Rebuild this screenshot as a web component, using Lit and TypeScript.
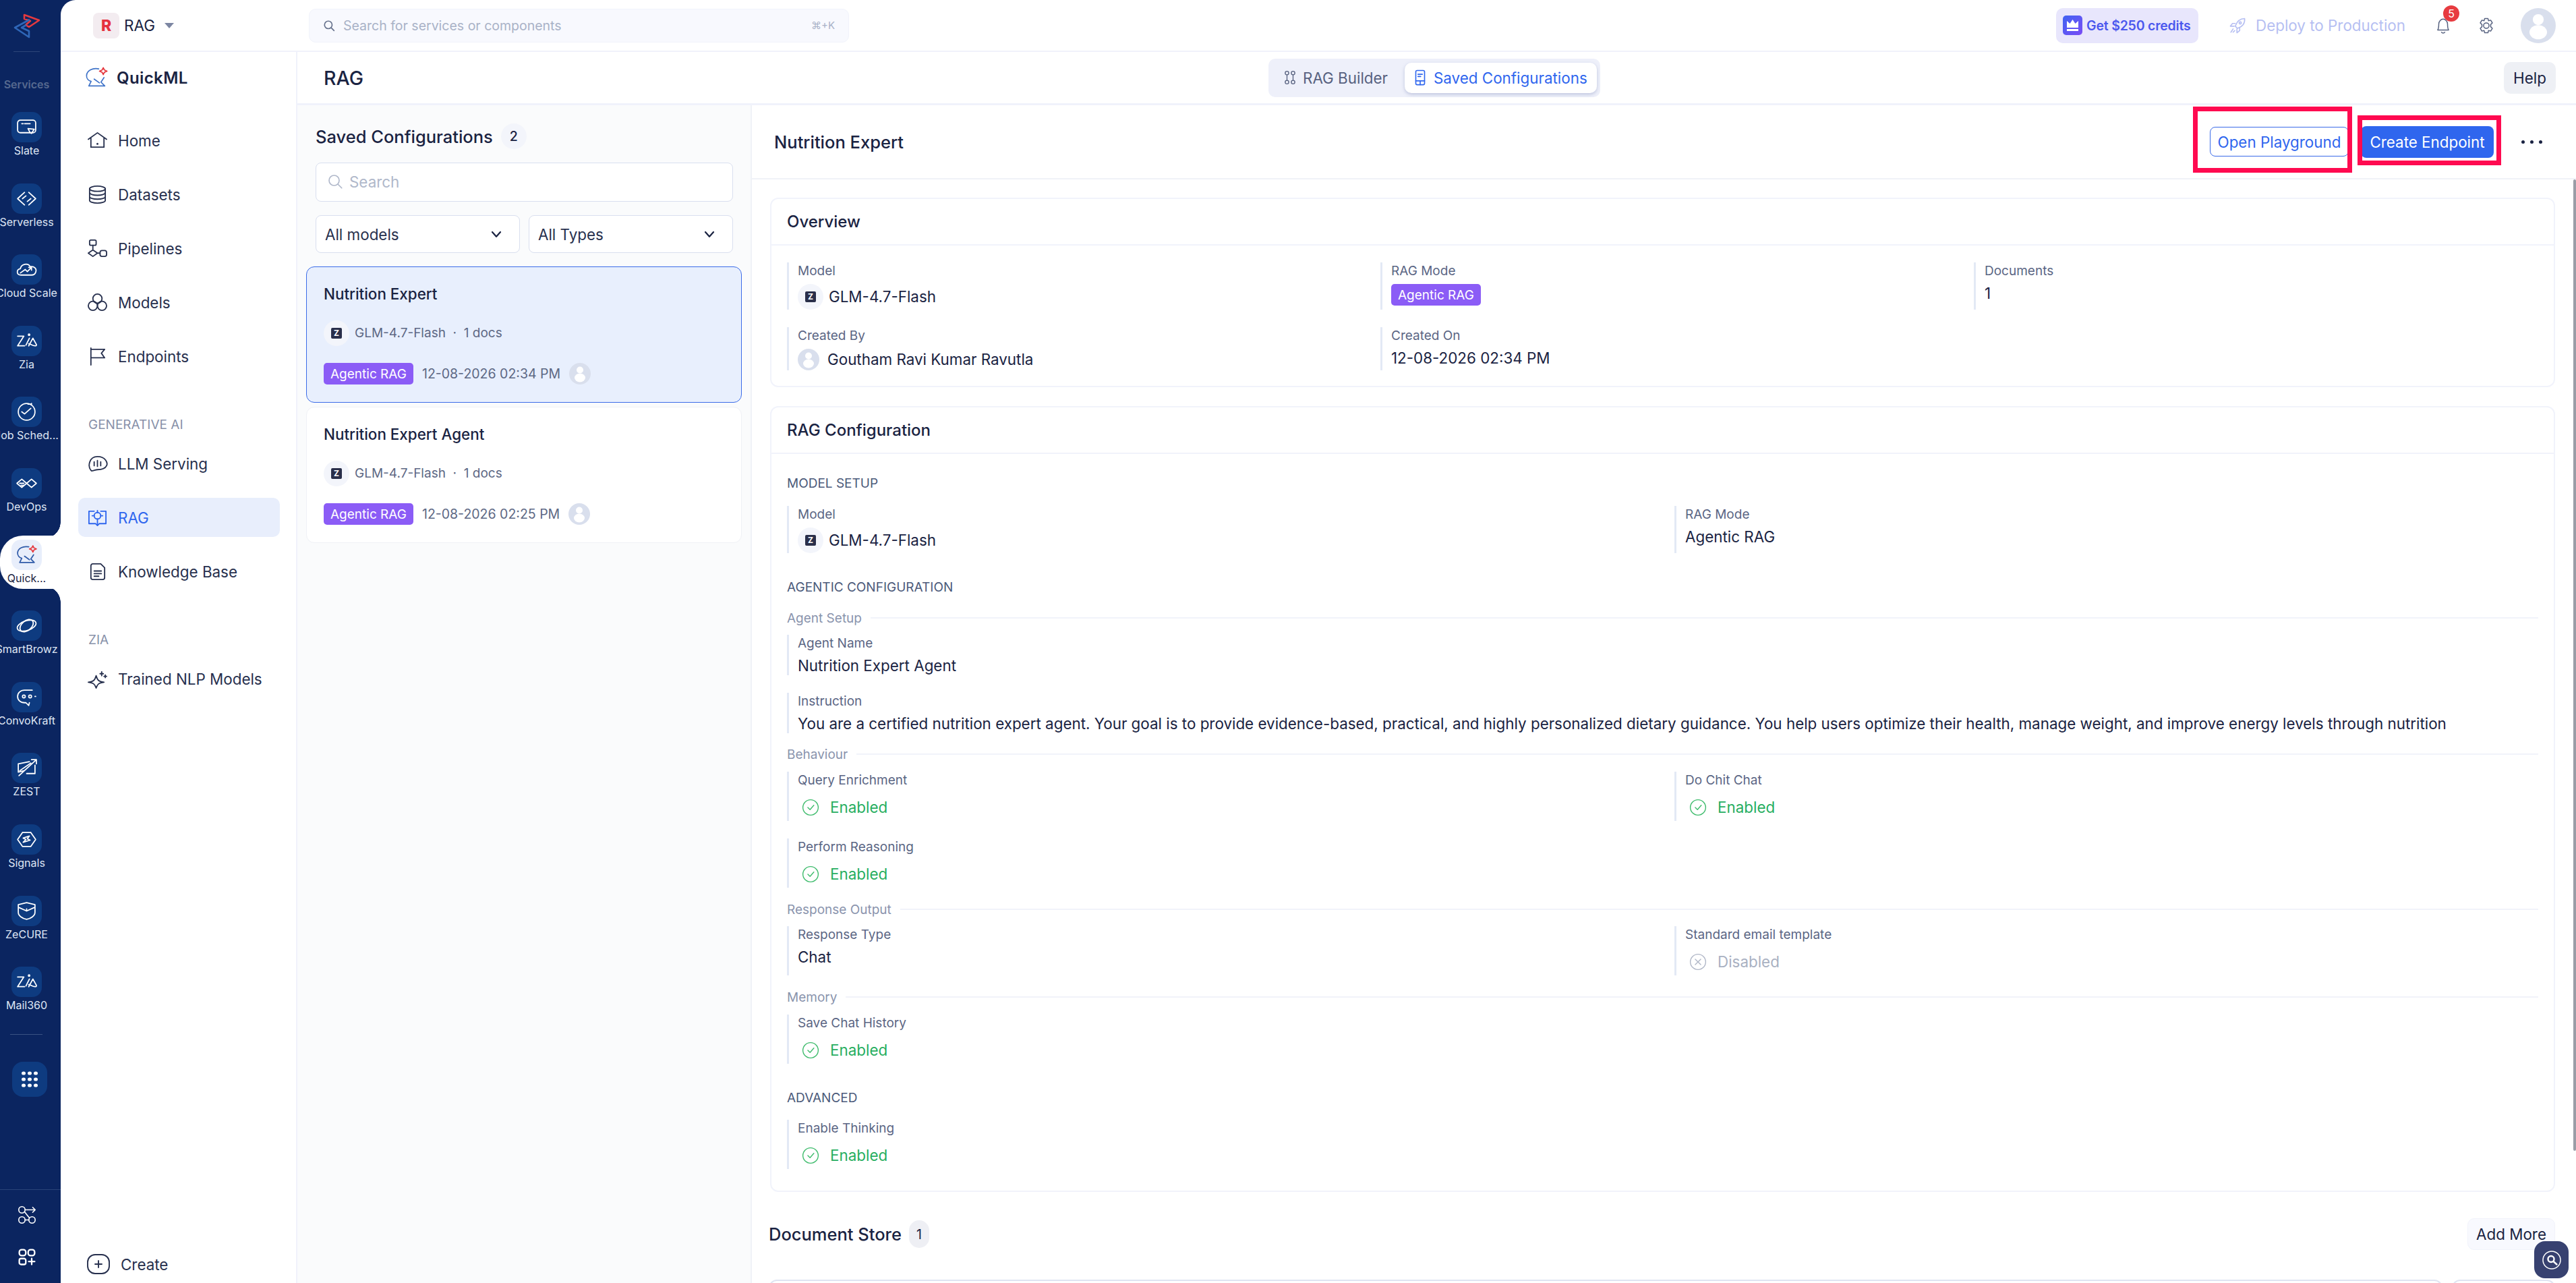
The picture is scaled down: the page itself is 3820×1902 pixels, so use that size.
import { LitElement, html, css, svg } from 'lit';
import { customElement } from 'lit/decorators.js';

const ic = (size: number, body: unknown, color = 'currentColor', sw = 1.6) => html`<svg
  width=${size}
  height=${size}
  viewBox="0 0 32 32"
  fill="none"
  stroke=${color}
  stroke-width=${sw}
  stroke-linecap="round"
  stroke-linejoin="round"
>${body}</svg>`;

const ZIA = svg`<path d="M3 9h9L3 23h10"/><path d="M15 22l5-10"/><circle cx="19.5" cy="7" r="1" fill="currentColor"/><path d="M19 23l6-11 5 9c.5 1.400-.5 2-2 2-4 0-6-3-9-3"/>`;
const QUICK = svg`<path d="M19 4.500C11 3 3.500 6.500 3 13c-.3 4 2.500 7 6 8l-3 6h21l-5-5 4-6"/><path d="M13 18l7 5"/><path d="M25 3l1.500 3L30 7.500 26.500 9 25 12l-1.500-3L20 7.500 23.500 6z" stroke="#e5393f" fill="none"/>`;

const RAIL: { label: string; icon: unknown; active?: boolean }[] = [
  { label: 'Slate', icon: svg`<rect x="3" y="6" width="26" height="18" rx="4"/><path d="M9 11h2M13 11h8"/><path d="M18 18l9 1-4 6-2-1z"/>` },
  { label: 'Serverless', icon: svg`<path d="M13 7L3 16l10 9M10 16l5-4M19 7l10 9-10 9M22 16l-5 4"/>` },
  { label: 'Cloud Scale', icon: svg`<path d="M8 24c-7 0-7-8-1-9 1-7 11-9 14-3 6-1 10 3 8 8-1 3-3 4-6 4z"/><path d="M7 21l7-5 3 3 6-6M19 13h4v4"/>` },
  { label: 'Zia', icon: ZIA },
  { label: 'Job Sched...', icon: svg`<circle cx="16" cy="16" r="12"/><path d="M9 16l4 3 9-8M18 5h5v-1"/>` },
  { label: 'DevOps', icon: svg`<path d="M2 16l7-6 7 6-7 6zM16 16l7-6 7 6-7 6zM6 16h6M8 19h4"/>` },
  { label: 'Quick...', icon: QUICK, active: true },
  { label: 'SmartBrowz', icon: svg`<ellipse cx="16" cy="16" rx="14" ry="7" transform="rotate(-18 16 16)"/><ellipse cx="16" cy="16" rx="7" ry="11" transform="rotate(50 16 16)"/>` },
  { label: 'ConvoKraft', icon: svg`<path d="M24 6H13C7 6 3 10 3 15s4 9 10 9h2l4 4 1-4"/><circle cx="12" cy="15" r="2"/><circle cx="21" cy="15" r="2"/><path d="M29 15h-1"/>` },
  { label: 'ZEST', icon: svg`<path d="M4 10l16-3M4 10v12l8-2M30 4L5 27M30 4h-7M30 4v6M28 12v12H16M22 9L6 20"/>` },
  { label: 'Signals', icon: svg`<path d="M10 6L3 16l7 10M22 6l7 10-7 10M10 6h12M10 26h12"/><path d="M11 20l10-3-4-2 3-4-9 3 4 2z"/>` },
  { label: 'ZeCURE', icon: svg`<path d="M16 4l12 3v11c0 5-6 9-12 10C10 27 4 23 4 18V7z"/><path d="M5 11l11 5 11-5M16 16v-3"/>` },
  { label: 'Mail360', icon: ZIA },
];

const NAV_TOP = [
  { label: 'Home', icon: svg`<path d="M2 14L16 4l14 10M6 12v14h20V12"/><circle cx="16" cy="21" r=".6" fill="currentColor"/>` },
  { label: 'Datasets', icon: svg`<ellipse cx="16" cy="7" rx="12" ry="4"/><path d="M4 7v18c0 2 5 4 12 4s12-2 12-4V7M4 13c0 2 5 4 12 4s12-2 12-4M4 19c0 2 5 4 12 4s12-2 12-4"/>` },
  { label: 'Pipelines', icon: svg`<rect x="4" y="3" width="10" height="8" rx="2"/><path d="M9 11v7M2 23l7-5 7 5-7 5zM16 23h4"/><rect x="20" y="19" width="10" height="9" rx="3"/>` },
  { label: 'Models', icon: svg`<circle cx="16" cy="10" r="7"/><circle cx="9" cy="21" r="7"/><circle cx="23" cy="21" r="7"/>` },
  { label: 'Endpoints', icon: svg`<path d="M6 3v26M6 5h21l-5 6 5 7H6"/>` },
];

const CHECK = (size = 26) => ic(size, svg`<circle cx="16" cy="16" r="14"/><path d="M11 16l4 4 7-8"/>`, '#3dbb6b', 1.7);

const AVATAR = (size: number) => html`<svg width=${size} height=${size} viewBox="0 0 32 32">
  <circle cx="16" cy="16" r="16" fill="#d9dfed"></circle>
  <circle cx="16" cy="10.500" r="5" fill="#fff"></circle>
  <ellipse cx="16" cy="22" rx="8" ry="6.500" fill="#fff"></ellipse>
</svg>`;

const ZLOGO = html`<span class="zlogo"><b>Z</b></span>`;

@customElement('app-root')
export class AppRoot extends LitElement {
  static styles = css`
    :host {
      display: block;
      font-family: Inter, 'Liberation Sans', sans-serif;
      color: #1a2342;
    }
    * {
      box-sizing: border-box;
    }
    .app {
      display: flex;
      width: 100vw;
      height: 100vh;
      overflow: hidden;
      background: #0b2560;
    }

    /* left rail */
    .rail {
      width: 90px;
      flex: none;
      display: flex;
      flex-direction: column;
      overflow: hidden;
      color: #fff;
    }
    .rail-logo {
      height: 77px;
      margin: 0 11px 0 0;
      display: flex;
      align-items: center;
      justify-content: center;
      position: relative;
    }
    .rail-logo::after {
      content: '';
      position: absolute;
      left: 20px;
      right: 20px;
      bottom: 0;
      height: 1px;
      background: #2c4578;
    }
    .rail-title {
      width: 79px;
      text-align: center;
      font-size: 16px;
      font-weight: 600;
      color: #56698f;
      height: 24px;
      line-height: 24px;
      margin: 36px 0 29px;
    }
    .rail-item {
      width: 79px;
      height: 105.6px;
      display: flex;
      flex-direction: column;
      align-items: center;
      position: relative;
    }
    .rail-box {
      width: 45px;
      height: 45px;
      flex: none;
      border-radius: 14px;
      background: #0e3b80;
      display: flex;
      align-items: center;
      justify-content: center;
      position: relative;
      z-index: 1;
    }
    .rail-label {
      font-size: 16px;
      line-height: 24px;
      white-space: nowrap;
      color: #dfe6f4;
      position: relative;
      z-index: 1;
    }
    .rail-item.active .rail-box {
      background: #e8eefb;
      color: #2f5aa8;
    }
    .rail-item.active .rail-label {
      color: #1a2342;
    }
    .pill {
      position: absolute;
      left: 0;
      right: -11px;
      top: -6px;
      height: 79px;
      background: #fff;
      border-radius: 34px 0 0 34px;
    }
    .pill::before,
    .pill::after {
      content: '';
      position: absolute;
      right: 0;
      width: 24px;
      height: 20px;
    }
    .pill::before {
      top: -20px;
      background: radial-gradient(circle at 0 0, #0b2560 23.500px, #fff 24px);
    }
    .pill::after {
      bottom: -20px;
      background: radial-gradient(circle at 0 100%, #0b2560 23.500px, #fff 24px);
    }
    .rail-div {
      width: 48px;
      height: 1px;
      margin: -6px 0 0 15px;
      background: #3a5283;
      flex: none;
    }
    .rail-grid {
      width: 52px;
      height: 52px;
      flex: none;
      margin: 40px 0 0 18px;
      border-radius: 16px;
      background: #0e3b80;
      display: grid;
      place-items: center;
    }
    .rail-foot {
      margin-top: auto;
      height: 139px;
      flex: none;
      border-top: 1px solid #2a4478;
      display: flex;
      flex-direction: column;
      align-items: center;
      gap: 34px;
      padding: 22px 11px 0 0;
    }

    .shell {
      flex: 1;
      min-width: 0;
      background: #fff;
      border-top-left-radius: 22px;
      display: flex;
      flex-direction: column;
      overflow: hidden;
    }

    /* top bar */
    .topbar {
      height: 77px;
      flex: none;
      border-bottom: 2px solid #f0f2fb;
      display: flex;
      align-items: center;
      padding: 0 30px 0 48px;
    }
    .brand {
      width: 320px;
      display: flex;
      align-items: center;
      font-size: 22.500px;
    }
    .brand-r {
      width: 39px;
      height: 38px;
      border-radius: 8px;
      background: #f3ecf0;
      color: #e5323f;
      font-weight: 800;
      font-size: 23px;
      display: grid;
      place-items: center;
      margin-right: 7px;
    }
    .caret {
      width: 0;
      height: 0;
      margin-left: 14px;
      border: 7px solid transparent;
      border-top: 8px solid #7c86a2;
      border-bottom: 0;
    }
    .gsearch {
      width: 801px;
      height: 50px;
      border: 1px solid #f1f3fb;
      border-radius: 10px;
      background: #f8f9fe;
      display: flex;
      align-items: center;
      padding: 0 20px;
      font-size: 19.500px;
      color: #a9b2c7;
    }
    .gsearch svg {
      margin-right: 12px;
      color: #66718c;
    }
    .kbd {
      margin-left: auto;
      font-size: 15px;
      color: #a9b2c7;
    }
    .topright {
      margin-left: auto;
      display: flex;
      align-items: center;
    }
    .credits {
      width: 211px;
      height: 52px;
      border-radius: 10px;
      background: #e8e6fc;
      display: flex;
      align-items: center;
      gap: 6px;
      padding-left: 10px;
      color: #4c58ee;
      font-weight: 600;
      font-size: 19.500px;
      white-space: nowrap;
      letter-spacing: -0.2px;
    }
    .crown {
      width: 29px;
      height: 29px;
      border-radius: 5px;
      background: linear-gradient(135deg, #3f63f2, #7a4cf5);
      display: grid;
      place-items: center;
      flex: none;
    }
    .deploy {
      margin-left: 45px;
      display: flex;
      align-items: center;
      gap: 14px;
      color: #b6bff2;
      font-size: 22.400px;
      white-space: nowrap;
    }
    .bell {
      margin-left: 43px;
      position: relative;
      display: flex;
      color: #56617f;
    }
    .notif {
      position: absolute;
      top: -17px;
      right: -11px;
      width: 24px;
      height: 24px;
      border-radius: 50%;
      background: #e73b40;
      color: #fff;
      font-size: 16px;
      display: grid;
      place-items: center;
    }
    .gear {
      margin-left: 38px;
      display: flex;
      color: #56617f;
    }
    .me {
      margin-left: 38px;
      display: flex;
    }

    .below {
      flex: 1;
      min-height: 0;
      display: flex;
    }

    /* service sidebar */
    .side {
      width: 351px;
      flex: none;
      border-right: 2px solid #f0f2fb;
      display: flex;
      flex-direction: column;
      padding-bottom: 12px;
    }
    .side-brand {
      height: 76px;
      display: flex;
      align-items: center;
      gap: 12px;
      padding-left: 35px;
      font-size: 24px;
      font-weight: 600;
      letter-spacing: 0.4px;
      color: #1a2342;
      margin-bottom: 26px;
    }
    .side-brand svg {
      color: #3f73c8;
    }
    .nav {
      display: flex;
      align-items: center;
      gap: 15px;
      height: 58px;
      margin: 0 24px 22px 26px;
      padding-left: 13px;
      border-radius: 10px;
      font-size: 22.400px;
      color: #27304e;
      flex: none;
    }
    .nav.on {
      background: #e8eefc;
      color: #2f66ee;
    }
    .side-head {
      margin: 39px 0 0 41px;
      height: 24px;
      line-height: 24px;
      font-size: 19px;
      color: #8891a9;
      flex: none;
    }
    .side-head + .nav {
      margin-top: 16px;
    }
    .create {
      margin: auto 0 0 39px;
      display: flex;
      align-items: center;
      gap: 16px;
      font-size: 22.400px;
      color: #27304e;
      height: 32px;
    }

    /* page */
    .page {
      flex: 1;
      min-width: 0;
      display: flex;
      flex-direction: column;
      position: relative;
    }
    .page-head {
      height: 79px;
      flex: none;
      display: grid;
      grid-template-columns: 1fr auto 1fr;
      align-items: center;
      padding: 0 30px 0 39px;
      border-bottom: 3px solid #f0f2fb;
    }
    .page-title {
      font-size: 28.500px;
      font-weight: 500;
    }
    .tabs {
      display: flex;
      align-items: center;
      height: 57px;
      width: 492px;
      padding: 0 5px 0 32px;
      background: #eef0fa;
      border-radius: 10px;
      margin-right: 16px;
      font-size: 22.400px;
      color: #57617f;
      justify-content: space-between;
    }
    .tab {
      display: flex;
      align-items: center;
      gap: 7px;
      white-space: nowrap;
      margin-left: -12px;
    }
    .tab.on {
      width: 285px;
      height: 45px;
      background: #fff;
      border-radius: 10px;
      box-shadow: 0 2px 5px rgba(100, 115, 170, 0.35);
      color: #2f66ee;
      padding-left: 10px;
      margin-left: 0;
    }
    .help {
      justify-self: end;
      width: 77px;
      height: 47px;
      border-radius: 10px;
      background: #eef0f5;
      display: grid;
      place-items: center;
      font-size: 22.400px;
    }
    .split {
      flex: 1;
      min-height: 0;
      display: flex;
    }

    /* configuration list */
    .list {
      width: 674px;
      flex: none;
      background: #fafbfc;
      border-right: 2px solid #f0f2f7;
      padding: 27px 13px 0;
    }
    .list-head {
      display: flex;
      align-items: center;
      gap: 12px;
      height: 38px;
      margin: 0 14px 20px;
      font-size: 25.500px;
      font-weight: 500;
    }
    .count {
      width: 38px;
      height: 38px;
      border-radius: 50%;
      background: #f3f5fb;
      display: grid;
      place-items: center;
      font-size: 19.500px;
    }
    .input {
      height: 58px;
      margin: 0 13px 20px 14px;
      background: #fff;
      border: 1px solid #d9dfef;
      border-radius: 8px;
      display: flex;
      align-items: center;
      gap: 9px;
      padding: 0 0 2px 16px;
      font-size: 22.400px;
      color: #b0b8ca;
    }
    .selects {
      display: flex;
      gap: 13px;
      margin: 0 13px 20px 14px;
    }
    .select {
      flex: 1;
      height: 56px;
      background: #fff;
      border: 1px solid #d9dfef;
      border-radius: 8px;
      display: flex;
      align-items: center;
      justify-content: space-between;
      padding: 0 22px 0 13px;
      font-size: 22.400px;
      color: #27304e;
    }
    .card {
      height: 202px;
      margin-bottom: 6px;
      padding: 26px 25px 0;
      background: #fff;
      border: 1px solid #eff1f6;
      border-radius: 12px;
    }
    .card.on {
      background: #e8effd;
      border-color: #3a6be8;
    }
    .card-title {
      font-size: 22.400px;
      font-weight: 500;
      line-height: 28px;
      margin-bottom: 24px;
    }
    .card-model {
      display: flex;
      align-items: center;
      gap: 8px;
      height: 39px;
      margin-bottom: 25px;
      font-size: 19px;
      color: #5d6884;
      white-space: pre;
    }
    .card-foot {
      display: flex;
      align-items: center;
      gap: 13px;
      font-size: 19.500px;
      color: #5d6884;
    }
    .zcircle {
      width: 38px;
      height: 38px;
      border-radius: 50%;
      background: #f3f5fb;
      display: grid;
      place-items: center;
      flex: none;
    }
    .zlogo {
      width: 16px;
      height: 16px;
      border-radius: 2px;
      background: #2a2f4a;
      color: #fff;
      display: grid;
      place-items: center;
      font-size: 12px;
      line-height: 1;
    }
    .tag {
      display: inline-flex;
      align-items: center;
      height: 32px;
      padding: 0 10px;
      background: #8b5cf6;
      border-radius: 5px;
      color: #fff;
      font-size: 19px;
      white-space: nowrap;
    }

    /* detail */
    .detail {
      flex: 1;
      min-width: 0;
      display: flex;
      flex-direction: column;
    }
    .detail-head {
      height: 110px;
      flex: none;
      display: flex;
      align-items: center;
      justify-content: space-between;
      padding: 0 50px 0 33px;
      border-bottom: 2px solid #f0f2f8;
    }
    .detail-title {
      font-size: 25.500px;
      font-weight: 500;
    }
    .actions {
      display: flex;
      align-items: center;
    }
    .btn {
      position: relative;
      display: grid;
      place-items: center;
      border-radius: 8px;
      font-size: 22.400px;
      white-space: nowrap;
    }
    .btn.outline {
      width: 206px;
      height: 44px;
      border: 1px solid #3a6be8;
      color: #2f66ee;
    }
    .btn.solid {
      width: 197px;
      height: 47px;
      margin-left: 18px;
      background: #2f66ee;
      color: #fff;
    }
    /* red review boxes over the two buttons */
    .mark {
      position: absolute;
      border: 7px solid #ff0a50;
      pointer-events: none;
    }
    .mark.a {
      left: -26px;
      right: -6px;
      top: -31px;
      bottom: -25px;
    }
    .mark.b {
      left: -5px;
      right: -11px;
      top: -16px;
      bottom: -11px;
    }
    .more {
      margin-left: 41px;
      display: flex;
      gap: 8px;
    }
    .more i {
      width: 5px;
      height: 5px;
      border-radius: 50%;
      background: #1a2342;
    }
    .scroll {
      flex: 1;
      min-height: 0;
      padding: 27px 31px 0 27px;
      overflow: hidden;
    }
    .panel {
      border: 2px solid #f1f3fb;
      border-radius: 12px;
      margin-bottom: 28px;
    }
    .panel-head {
      height: 69px;
      padding-left: 23px;
      display: flex;
      align-items: center;
      font-size: 24px;
      font-weight: 500;
      border-bottom: 2px solid #f1f3fb;
    }
    .panel-body {
      padding: 25px 23px 23px;
    }
    .grid3 {
      display: grid;
      grid-template-columns: 880px 880px 1fr;
      row-gap: 26px;
    }
    .grid2 {
      display: grid;
      grid-template-columns: 1316px 1fr;
    }
    .field {
      border-left: 3px solid #e3e9f5;
      padding-left: 13px;
    }
    .field-label {
      height: 24px;
      line-height: 24px;
      padding-top: 1px;
      margin-bottom: 8px;
      font-size: 19px;
      color: #5b6684;
    }
    .field-value {
      min-height: 28px;
      line-height: 28px;
      font-size: 22.400px;
      color: #1a2342;
      white-space: nowrap;
    }
    .field-value.row {
      display: flex;
      align-items: center;
      gap: 8px;
    }
    .status {
      display: flex;
      align-items: center;
      gap: 16px;
      height: 41px;
      padding-left: 6px;
      font-size: 22.400px;
      color: #27ae60;
    }
    .status.off {
      color: #a9b1c2;
    }
    .group {
      height: 22px;
      line-height: 22px;
      font-size: 19px;
      color: #4c5a7a;
    }
    .sub {
      height: 22px;
      display: flex;
      align-items: center;
      gap: 13px;
      font-size: 19px;
      color: #8a94ad;
    }
    .sub::after {
      content: '';
      flex: 1;
      height: 2px;
      background: #f1f3fa;
    }
    .docs {
      display: flex;
      align-items: center;
      justify-content: space-between;
      margin: 39px 0 44px -2px;
      height: 47px;
    }
    .docs-title {
      display: flex;
      align-items: center;
      gap: 11px;
      font-size: 25.500px;
      font-weight: 500;
    }
    .docs-count {
      width: 30px;
      height: 41px;
      border-radius: 15px;
      background: #eeeff4;
      display: grid;
      place-items: center;
      font-size: 19.500px;
      font-weight: 400;
    }
    .addmore {
      width: 130px;
      height: 47px;
      border: 1px solid #f1f3fb;
      border-radius: 10px;
      background: #f8f9fe;
      display: grid;
      place-items: center;
      font-size: 22.400px;
    }
    .doc-cards {
      display: flex;
      gap: 14px;
      margin-left: -2px;
    }
    .doc-card {
      height: 60px;
      border: 2px solid #dfe4f2;
      border-radius: 12px;
      flex: 1;
    }
    .doc-card.small {
      flex: none;
      width: 153px;
    }
    .thumb {
      position: absolute;
      right: 0;
      top: 189px;
      width: 4px;
      height: 1440px;
      border-radius: 2px;
      background: #9a9da6;
    }
    .fab {
      position: absolute;
      right: 11px;
      bottom: 7px;
      width: 51px;
      height: 55px;
      border-radius: 16px;
      background: #374170;
      display: grid;
      place-items: center;
      color: #fff;
    }
  `;

  private field(label: string, value: unknown) {
    return html`<div class="field">
      <div class="field-label">${label}</div>
      ${value}
    </div>`;
  }

  private modelValue() {
    return html`<div class="field-value row"><span class="zcircle">${ZLOGO}</span>GLM-4.7-Flash</div>`;
  }

  private enabled() {
    return html`<div class="status">${CHECK()}Enabled</div>`;
  }

  private card(title: string, date: string, on = false) {
    return html`<div class="card ${on ? 'on' : ''}">
      <div class="card-title">${title}</div>
      <div class="card-model"><span class="zcircle">${ZLOGO}</span>GLM-4.7-Flash  ·  1 docs</div>
      <div class="card-foot"><span class="tag">Agentic RAG</span>${date}${AVATAR(32)}</div>
    </div>`;
  }

  private renderRail() {
    return html`<aside class="rail">
      <div class="rail-logo">
        <svg width="40" height="44" viewBox="0 0 40 44" fill="none" stroke-width="2.600" stroke-linejoin="round">
          <path d="M16 5l22 8-15 10-5-3 7-6-9-3z" stroke="#e5393f"></path>
          <path d="M24 12L2 24l21 14v-9l-11-5 7-4" stroke="#2f67b8"></path>
        </svg>
      </div>
      <div class="rail-title">Services</div>
      <div class="rail-list">
        ${RAIL.map(
          (r) => html`<div class="rail-item ${r.active ? 'active' : ''}">
            ${r.active ? html`<span class="pill"></span>` : ''}
            <span class="rail-box">${ic(33, r.icon, 'currentColor', 1.7)}</span>
            <span class="rail-label">${r.label}</span>
          </div>`
        )}
      </div>
      <div class="rail-div"></div>
      <div class="rail-grid">
        <svg width="24" height="24" viewBox="0 0 24 24" fill="#fff">
          ${[3, 12, 21].map((y) =>
            [3, 12, 21].map((x) => svg`<ellipse cx=${x} cy=${y} rx="3" ry="2.600"></ellipse>`)
          )}
        </svg>
      </div>
      <div class="rail-foot">
        ${ic(30, svg`<circle cx="8" cy="8" r="5"/><circle cx="8" cy="24" r="5"/><circle cx="24" cy="24" r="5"/><path d="M13 8h16M25 4l4 4-4 4M12 11l8 10M13 24h6"/>`, '#fff', 1.7)}
        ${ic(28, svg`<rect x="3" y="3" width="11" height="10" rx="4"/><rect x="18" y="3" width="11" height="10" rx="4"/><rect x="3" y="18" width="11" height="10" rx="3"/><path d="M24 18v10M19 23h10"/>`, '#fff', 2.600)}
      </div>
    </aside>`;
  }

  private renderTopbar() {
    return html`<header class="topbar">
      <div class="brand"><span class="brand-r">R</span>RAG<span class="caret"></span></div>
      <div class="gsearch">
        ${ic(18, svg`<circle cx="14" cy="14" r="10"/><path d="M22 22l7 7"/>`, 'currentColor', 3)}
        Search for services or components
        <span class="kbd">⌘+K</span>
      </div>
      <div class="topright">
        <div class="credits">
          <span class="crown">
            <svg width="21" height="21" viewBox="0 0 21 21" fill="#fff">
              <path d="M2 4l4.500 4L10.500 2l4 6L19 4v10H2z"></path>
              <rect x="2" y="16" width="17" height="3"></rect>
            </svg>
          </span>
          Get $250 credits
        </div>
        <div class="deploy">
          ${ic(26, svg`<path d="M29 3c-8 0-14 5-17 14l4 4c9-3 14-9 13-18zM12 12H7l-4 5h7M20 20v5l-5 4v-7M8 22l-4 6M11 25l-3 3"/><circle cx="21" cy="11" r="2"/>`, 'currentColor', 2)}
          Deploy to Production
        </div>
        <div class="bell">
          ${ic(26, svg`<path d="M6 24c2-3 2-6 2-11 0-5 4-9 8-9s8 4 8 9c0 5 0 8 2 11zM13 28c1 2 5 2 6 0"/>`, 'currentColor', 1.800)}
          <span class="notif">5</span>
        </div>
        <div class="gear">
          ${ic(26, svg`<circle cx="16" cy="16" r="5"/><path d="M13 3h6l1 4 4-1 3 5-3 3v4l3 3-3 5-4-1-1 4h-6l-1-4-4 1-3-5 3-3v-4L5 11l3-5 4 1z"/>`, 'currentColor', 1.800)}
        </div>
        <div class="me">${AVATAR(52)}</div>
      </div>
    </header>`;
  }

  private renderSide() {
    return html`<nav class="side">
      <div class="side-brand">${ic(36, QUICK, 'currentColor', 1.500)}QuickML</div>
      ${NAV_TOP.map((n) => html`<div class="nav">${ic(31, n.icon, 'currentColor', 1.900)}${n.label}</div>`)}
      <div class="side-head">GENERATIVE AI</div>
      <div class="nav">
        ${ic(31, svg`<path d="M6 26c-5-6-3-21 10-21s16 10 14 14-8 6-14 6c-3 0-6 2-9 2zM11 13v6M16 11v9M21 13v6"/>`, 'currentColor', 1.900)}LLM Serving
      </div>
      <div class="nav on">
        ${ic(31, svg`<path d="M11 6H3v19h10l3 3 3-3h10V6h-8M3 6v19"/><circle cx="16" cy="13" r="5"/><path d="M16 5v3M16 18v3M8 13h3M21 13h3M16 21v6"/>`, 'currentColor', 1.900)}RAG
      </div>
      <div class="nav">
        ${ic(31, svg`<path d="M6 7a3 3 0 013-3h12l6 6v15a3 3 0 01-3 3H9a3 3 0 01-3-3zM11 15h11M11 19h11M11 23h7"/>`, 'currentColor', 1.900)}Knowledge Base
      </div>
      <div class="side-head">ZIA</div>
      <div class="nav">
        ${ic(31, svg`<path d="M2 21c8-1 10-3 12-10 2 7 4 9 12 10-8 1-10 3-12 9-2-6-4-8-12-9zM20 8h5M22.500 5v6M26 12h4M28 10v4"/>`, 'currentColor', 1.900)}Trained NLP Models
      </div>
      <div class="create">
        <svg width="34" height="32" viewBox="0 0 34 32" fill="none" stroke="currentColor" stroke-width="1.900" stroke-linecap="round">
          <rect x="1" y="2" width="32" height="28" rx="11"></rect>
          <path d="M12 16h10M17 11v10"></path>
        </svg>
        Create
      </div>
    </nav>`;
  }

  private renderConfig() {
    return html`<section class="panel" style="margin-bottom:0">
      <div class="panel-head">RAG Configuration</div>
      <div class="panel-body" style="padding:33px 23px 32px">
        <div class="group" style="margin-bottom:22px">MODEL SETUP</div>
        <div class="grid2">
          ${this.field('Model', this.modelValue())}
          ${this.field('RAG Mode', html`<div class="field-value">Agentic RAG</div>`)}
        </div>
        <div class="group" style="margin:40px 0 23px">AGENTIC CONFIGURATION</div>
        <div class="sub" style="margin-bottom:14px">Agent Setup</div>
        ${this.field('Agent Name', html`<div class="field-value">Nutrition Expert Agent</div>`)}
        <div style="height:26px"></div>
        ${this.field(
          'Instruction',
          html`<div class="field-value">You are a certified nutrition expert agent. Your goal is to provide evidence-based, practical, and highly personalized dietary guidance. You help users optimize their health, manage weight, and improve energy levels through nutrition</div>`
        )}
        <div class="sub" style="margin:20px 0 15px">Behaviour</div>
        <div class="grid2" style="row-gap:26px">
          ${this.field('Query Enrichment', this.enabled())}
          ${this.field('Do Chit Chat', this.enabled())}
          ${this.field('Perform Reasoning', this.enabled())}
        </div>
        <div class="sub" style="margin:21px 0 14px">Response Output</div>
        <div class="grid2">
          ${this.field('Response Type', html`<div class="field-value">Chat</div>`)}
          ${this.field(
            'Standard email template',
            html`<div class="status off">
              ${ic(26, svg`<circle cx="16" cy="16" r="14"/><path d="M11 11l10 10M21 11L11 21"/>`, '#b0b7c7', 1.700)}Disabled
            </div>`
          )}
        </div>
        <div class="sub" style="margin:21px 0 15px">Memory</div>
        ${this.field('Save Chat History', this.enabled())}
        <div class="group" style="margin:40px 0 21px">ADVANCED</div>
        ${this.field('Enable Thinking', this.enabled())}
      </div>
    </section>`;
  }

  private renderDetail() {
    return html`<div class="detail">
      <div class="detail-head">
        <div class="detail-title">Nutrition Expert</div>
        <div class="actions">
          <div class="btn outline">Open Playground<span class="mark a"></span></div>
          <div class="btn solid">Create Endpoint<span class="mark b"></span></div>
          <div class="more"><i></i><i></i><i></i></div>
        </div>
      </div>
      <div class="scroll">
        <section class="panel">
          <div class="panel-head">Overview</div>
          <div class="panel-body">
            <div class="grid3">
              ${this.field('Model', this.modelValue())}
              ${this.field('RAG Mode', html`<span class="tag">Agentic RAG</span>`)}
              ${this.field('Documents', html`<div class="field-value">1</div>`)}
              ${this.field(
                'Created By',
                html`<div class="field-value row">${AVATAR(32)}<span style="margin-left:4px">Goutham Ravi Kumar Ravutla</span></div>`
              )}
              ${this.field('Created On', html`<div class="field-value">12-08-2026 02:34 PM</div>`)}
            </div>
          </div>
        </section>
        ${this.renderConfig()}
        <div class="docs">
          <div class="docs-title">Document Store<span class="docs-count">1</span></div>
          <div class="addmore">Add More</div>
        </div>
        <div class="doc-cards">
          <div class="doc-card"></div>
          <div class="doc-card small"></div>
        </div>
      </div>
    </div>`;
  }

  render() {
    return html`<div class="app">
      ${this.renderRail()}
      <div class="shell">
        ${this.renderTopbar()}
        <div class="below">
          ${this.renderSide()}
          <main class="page">
            <div class="page-head">
              <div class="page-title">RAG</div>
              <div class="tabs">
                <div class="tab">
                  ${ic(24, svg`<circle cx="10" cy="7" r="3.500"/><circle cx="22" cy="7" r="3.500"/><circle cx="10" cy="25" r="3.500"/><circle cx="22" cy="25" r="3.500"/><path d="M10 11v10M22 11v10"/>`, 'currentColor', 1.800)}
                  RAG Builder
                </div>
                <div class="tab on">
                  ${ic(26, svg`<rect x="8" y="3" width="16" height="26" rx="2.500"/><path d="M12 10h8M12 14h5M8 22h16M16 22v7"/>`, 'currentColor', 2)}
                  Saved Configurations
                </div>
              </div>
              <div class="help">Help</div>
            </div>
            <div class="split">
              <div class="list">
                <div class="list-head">Saved Configurations<span class="count">2</span></div>
                <div class="input">
                  ${ic(24, svg`<circle cx="14" cy="14" r="10"/><path d="M22 22l7 7"/>`, 'currentColor', 2.200)}Search
                </div>
                <div class="selects">
                  <div class="select">All models${ic(24, svg`<path d="M8 12l8 9 8-9"/>`, '#1a2342', 3)}</div>
                  <div class="select">All Types${ic(24, svg`<path d="M8 12l8 9 8-9"/>`, '#1a2342', 3)}</div>
                </div>
                ${this.card('Nutrition Expert', '12-08-2026 02:34 PM', true)}
                ${this.card('Nutrition Expert Agent', '12-08-2026 02:25 PM')}
              </div>
              ${this.renderDetail()}
            </div>
            <span class="thumb"></span>
            <span class="fab">
              ${ic(32, svg`<circle cx="16" cy="16" r="13"/><circle cx="15" cy="14.500" r="4.500" stroke-width="2.400"/><path d="M18.500 18l5 4.500" stroke-width="2.400"/>`, '#fff', 1.500)}
            </span>
          </main>
        </div>
      </div>
    </div>`;
  }
}

declare global {
  interface HTMLElementTagNameMap {
    'app-root': AppRoot;
  }
}
